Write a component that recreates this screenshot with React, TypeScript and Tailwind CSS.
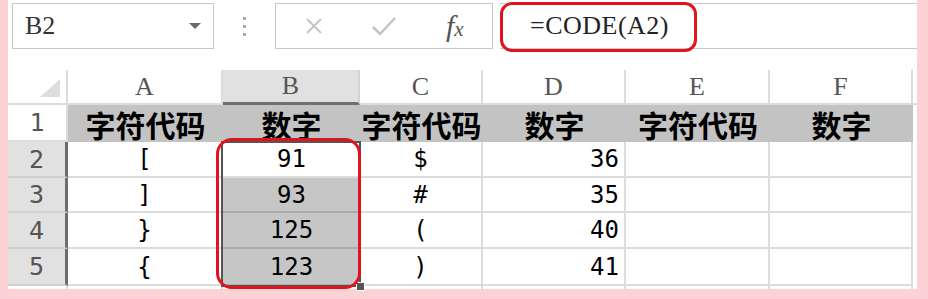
import React from "react";

const serif = { fontFamily: '"Liberation Serif", "DejaVu Serif", serif' };
const dmono = { fontFamily: '"DejaVu Sans Mono", "Liberation Mono", monospace' };
const cjk = { fontFamily: '"Noto Sans CJK SC", "Noto Sans", sans-serif' };

const colLetters = ["A", "B", "C", "D", "E", "F"];
const header = ["字符代码", "数字", "字符代码", "数字", "字符代码", "数字"];
const data = [
  ["[", "91", "$", "36"],
  ["]", "93", "#", "35"],
  ["}", "125", "(", "40"],
  ["{", "123", ")", "41"],
];

export default function App() {
  return (
    <div className="relative w-[928px] h-[299px] bg-[#fdd2d4] pl-[8px] pr-[11px] pb-[10px] overflow-hidden">
      <div className="bg-white h-full flex flex-col">
        {/* Toolbar */}
        <div className="h-[70px] shrink-0 flex items-start pt-[3px] pl-[4px]">
          <div className="w-[202px] h-[46px] border border-[#c8c8c8] flex items-center justify-between pl-[12px] pr-[12px]">
            <span className="text-[26px] text-[#333] leading-none" style={serif}>B2</span>
            <svg width="12" height="7" viewBox="0 0 12 7">
              <path d="M0 0 L12 0 L6 6 Z" fill="#6a6a6a" />
            </svg>
          </div>
          <div className="w-[61px] h-[46px] flex flex-col items-center justify-center gap-[5px]">
            <span className="w-[3px] h-[3px] bg-[#a8a8a8]" />
            <span className="w-[3px] h-[3px] bg-[#a8a8a8]" />
            <span className="w-[3px] h-[3px] bg-[#a8a8a8]" />
          </div>
          <div className="w-[218px] h-[46px] border border-[#c8c8c8] flex items-center pl-[29px]">
            <svg width="18" height="18" viewBox="0 0 18 18">
              <path d="M2 2 L16 16 M16 2 L2 16" stroke="#c4c4c4" strokeWidth="2" />
            </svg>
            <svg className="ml-[48px]" width="26" height="20" viewBox="0 0 26 20">
              <path d="M2 11 L9 18 L24 2" stroke="#c4c4c4" strokeWidth="2.5" fill="none" />
            </svg>
            <span className="ml-[49px] italic text-[#555] leading-none" style={serif}>
              <span className="text-[30px]">f</span>
              <span className="text-[21px]">x</span>
            </span>
          </div>
          <div className="ml-[7px] flex-1 h-[46px] border-y border-[#c8c8c8] flex items-center pl-[30px]">
            <span className="text-[26px] text-[#222] leading-none tracking-[0.5px]" style={serif}>=CODE(A2)</span>
          </div>
        </div>

        {/* Grid */}
        <div className="relative flex-1 grid grid-cols-[60px_155px_137px_123px_143px_144px_143px_1fr] grid-rows-[35px_37px_36px_35px_36px_37px_1fr]">
          {/* Column header row */}
          <div className="border-r-2 border-b-2 border-[#dcdcdc] bg-white relative">
            <svg className="absolute right-[6px] bottom-[6px]" width="20" height="18" viewBox="0 0 20 18">
              <path d="M20 0 L20 18 L0 18 Z" fill="#dedede" />
            </svg>
          </div>
          {colLetters.map((c) => (
            <div
              key={c}
              className={
                c === "B"
                  ? "flex items-center justify-center bg-[#e1e1e1] border-r-2 border-[#d4d4d4] border-b-[3px] border-b-[#707070]"
                  : "flex items-center justify-center bg-white border-r-2 border-b-2 border-[#dcdcdc]"
              }
            >
              <span className="text-[26px] text-[#555] leading-none" style={serif}>{c}</span>
            </div>
          ))}
          <div className="border-b-2 border-[#dcdcdc]" />

          {/* Row 1 */}
          <div className="flex items-center justify-center bg-white border-r-2 border-b-2 border-[#dcdcdc]">
            <span className="text-[25px] text-[#555] leading-none" style={dmono}>1</span>
          </div>
          {header.map((h, i) => (
            <div key={i} className="flex items-center justify-center bg-[#c3c3c3]">
              <span className="text-[30px] font-bold text-black leading-none" style={cjk}>{h}</span>
            </div>
          ))}
          <div />

          {/* Data rows */}
          {data.map((row, ri) => (
            <React.Fragment key={ri}>
              <div className="flex items-center justify-center bg-[#e1e1e1] border-b-2 border-b-[#cfcfcf] border-r-[3px] border-r-[#6e6e6e]">
                <span className="text-[25px] text-[#555] leading-none" style={dmono}>{ri + 2}</span>
              </div>
              <div className="flex items-center justify-center border-r-2 border-b-2 border-[#dcdcdc]">
                <span className="text-[24px] text-black leading-none" style={dmono}>{row[0]}</span>
              </div>
              <div
                className={
                  ri === 0
                    ? "flex items-center justify-center bg-white border-b-2 border-[#dcdcdc]"
                    : "flex items-center justify-center bg-[#c6c6c6] border-b-2 border-[#ababab]"
                }
              >
                <span className="text-[24px] text-black leading-none" style={dmono}>{row[1]}</span>
              </div>
              <div className="flex items-center justify-center border-r-2 border-b-2 border-[#dcdcdc]">
                <span className="text-[24px] text-black leading-none" style={dmono}>{row[2]}</span>
              </div>
              <div className="flex items-center justify-end pr-[5px] border-r-2 border-b-2 border-[#dcdcdc]">
                <span className="text-[24px] text-black leading-none" style={dmono}>{row[3]}</span>
              </div>
              <div className="border-r-2 border-b-2 border-[#dcdcdc]" />
              <div className="border-r-2 border-b-2 border-[#dcdcdc]" />
              <div />
            </React.Fragment>
          ))}

          {/* Partial last row */}
          <div className="bg-white border-r-2 border-[#dcdcdc]" />
          <div className="border-r-2 border-[#dcdcdc]" />
          <div className="border-r-2 border-[#dcdcdc]" />
          <div className="border-r-2 border-[#dcdcdc]" />
          <div className="border-r-2 border-[#dcdcdc]" />
          <div className="border-r-2 border-[#dcdcdc]" />
          <div className="border-r-2 border-[#dcdcdc]" />
          <div />

          {/* Selection border B2:B5 */}
          <div className="absolute left-[213px] top-[71px] w-[140px] h-[146px] border-2 border-[#555]" />
          <div className="absolute left-[348px] top-[212px] w-[9px] h-[9px] bg-[#555] border border-white" />
        </div>
      </div>

      {/* Red annotation boxes */}
      <div className="absolute left-[500px] top-[2px] w-[197px] h-[50px] border-[3px] border-[#e0141c] rounded-[12px]" />
      <div className="absolute left-[216px] top-[138px] w-[145px] h-[151px] border-[3px] border-[#e0141c] rounded-[16px]" />
    </div>
  );
}
